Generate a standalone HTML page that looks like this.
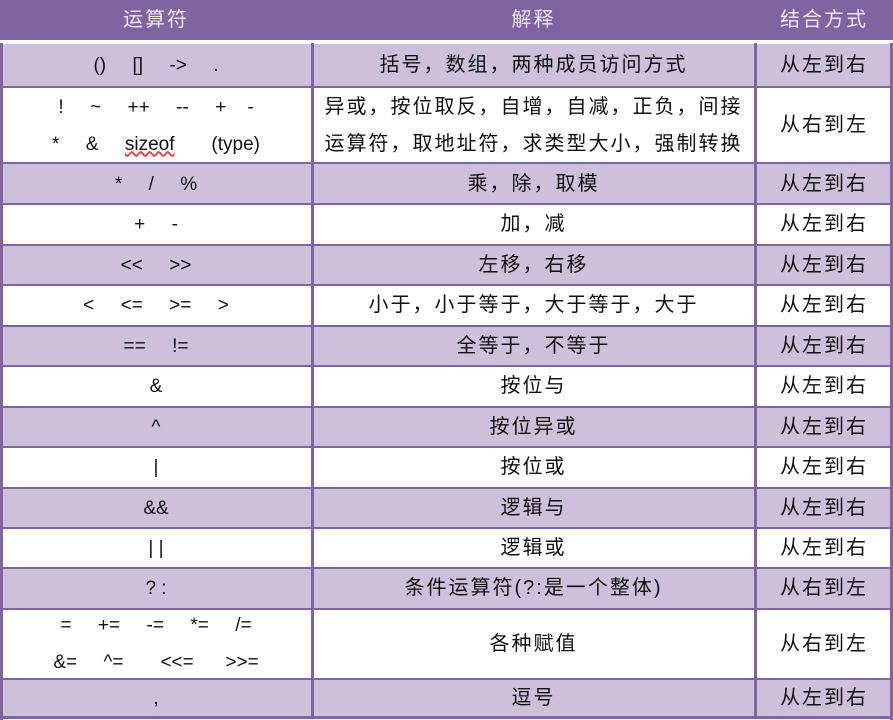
<!DOCTYPE html>
<html><head><meta charset="utf-8"><style>
body{margin:0;width:893px;height:720px;background:#fff;position:relative;overflow:hidden;font-family:"Liberation Sans","Noto Sans CJK SC",sans-serif;color:#111}
.hd{position:absolute;left:0;top:0;width:893px;height:40px;background:#8064a2}
.ht{position:absolute;top:0;height:40px;line-height:40px;text-align:center;color:#ece6f4;font-size:20px;letter-spacing:2px}
.r{position:absolute;left:0;width:893px;box-sizing:border-box}
.c{position:absolute;top:0;bottom:0;display:flex;align-items:center;justify-content:center;text-align:center;font-size:19px;line-height:37px}
.c>div{white-space:pre}
.z{font-size:20px;letter-spacing:2px;line-height:37px}
.l{position:absolute;background:#8064a2}
</style></head><body>
<div class="hd"></div>
<div class="ht" style="left:0;width:312px">运算符</div>
<div class="ht" style="left:312px;width:443px">解释</div>
<div class="ht" style="left:755px;width:138px">结合方式</div>

<div class="r" style="top:44px;height:43px;background:#ccc0da"><div class="c" style="left:0;width:312px"><div>()     []     ->     .</div></div><div class="c z" style="left:312px;width:443px"><div>括号，数组，两种成员访问方式</div></div><div class="c z" style="left:755px;width:138px"><div>从左到右</div></div></div>
<div class="r" style="top:87px;height:77px;background:#fff"><div class="c" style="left:0;width:312px"><div>!     ~     ++     --     +    -
*     &     <span style="text-decoration:underline wavy #e04040">sizeof</span>       (type)</div></div><div class="c z" style="left:312px;width:443px"><div>异或，按位取反，自增，自减，正负，间接
运算符，取地址符，求类型大小，强制转换</div></div><div class="c z" style="left:755px;width:138px"><div>从右到左</div></div></div>
<div class="r" style="top:164px;height:40px;background:#ccc0da"><div class="c" style="left:0;width:312px"><div>*     /     %</div></div><div class="c z" style="left:312px;width:443px"><div>乘，除，取模</div></div><div class="c z" style="left:755px;width:138px"><div>从左到右</div></div></div>
<div class="r" style="top:204px;height:41px;background:#fff"><div class="c" style="left:0;width:312px"><div>+     -</div></div><div class="c z" style="left:312px;width:443px"><div>加，减</div></div><div class="c z" style="left:755px;width:138px"><div>从左到右</div></div></div>
<div class="r" style="top:245px;height:40px;background:#ccc0da"><div class="c" style="left:0;width:312px"><div><<     >></div></div><div class="c z" style="left:312px;width:443px"><div>左移，右移</div></div><div class="c z" style="left:755px;width:138px"><div>从左到右</div></div></div>
<div class="r" style="top:285px;height:41px;background:#fff"><div class="c" style="left:0;width:312px"><div><     <=     >=     ></div></div><div class="c z" style="left:312px;width:443px"><div>小于，小于等于，大于等于，大于</div></div><div class="c z" style="left:755px;width:138px"><div>从左到右</div></div></div>
<div class="r" style="top:326px;height:40px;background:#ccc0da"><div class="c" style="left:0;width:312px"><div>==     !=</div></div><div class="c z" style="left:312px;width:443px"><div>全等于，不等于</div></div><div class="c z" style="left:755px;width:138px"><div>从左到右</div></div></div>
<div class="r" style="top:366px;height:41px;background:#fff"><div class="c" style="left:0;width:312px"><div>&</div></div><div class="c z" style="left:312px;width:443px"><div>按位与</div></div><div class="c z" style="left:755px;width:138px"><div>从左到右</div></div></div>
<div class="r" style="top:407px;height:40px;background:#ccc0da"><div class="c" style="left:0;width:312px"><div>^</div></div><div class="c z" style="left:312px;width:443px"><div>按位异或</div></div><div class="c z" style="left:755px;width:138px"><div>从左到右</div></div></div>
<div class="r" style="top:447px;height:41px;background:#fff"><div class="c" style="left:0;width:312px"><div>|</div></div><div class="c z" style="left:312px;width:443px"><div>按位或</div></div><div class="c z" style="left:755px;width:138px"><div>从左到右</div></div></div>
<div class="r" style="top:488px;height:40px;background:#ccc0da"><div class="c" style="left:0;width:312px"><div>&&</div></div><div class="c z" style="left:312px;width:443px"><div>逻辑与</div></div><div class="c z" style="left:755px;width:138px"><div>从左到右</div></div></div>
<div class="r" style="top:528px;height:40px;background:#fff"><div class="c" style="left:0;width:312px"><div>| |</div></div><div class="c z" style="left:312px;width:443px"><div>逻辑或</div></div><div class="c z" style="left:755px;width:138px"><div>从左到右</div></div></div>
<div class="r" style="top:568px;height:41px;background:#ccc0da"><div class="c" style="left:0;width:312px"><div>? :</div></div><div class="c z" style="left:312px;width:443px"><div>条件运算符(?:是一个整体)</div></div><div class="c z" style="left:755px;width:138px"><div>从右到左</div></div></div>
<div class="r" style="top:609px;height:70px;background:#fff"><div class="c" style="left:0;width:312px"><div>=     +=     -=     *=     /=
&=     ^=       <<=      >>=</div></div><div class="c z" style="left:312px;width:443px"><div>各种赋值</div></div><div class="c z" style="left:755px;width:138px"><div>从右到左</div></div></div>
<div class="r" style="top:679px;height:38px;background:#ccc0da"><div class="c" style="left:0;width:312px"><div>,</div></div><div class="c z" style="left:312px;width:443px"><div>逗号</div></div><div class="c z" style="left:755px;width:138px"><div>从左到右</div></div></div>

<div class="l" style="left:0;top:43px;width:3px;height:677px"></div>
<div class="l" style="left:890px;top:43px;width:3px;height:677px"></div>
<div class="l" style="left:311px;top:43px;width:3px;height:676px"></div>
<div class="l" style="left:754px;top:43px;width:3px;height:676px"></div>
<div class="l" style="left:0;top:716px;width:893px;height:3px"></div>
<div class="l" style="left:0;top:86px;width:893px;height:2px"></div>
<div class="l" style="left:0;top:162px;width:893px;height:2px"></div>
<div class="l" style="left:0;top:203px;width:893px;height:2px"></div>
<div class="l" style="left:0;top:244px;width:893px;height:2px"></div>
<div class="l" style="left:0;top:284px;width:893px;height:2px"></div>
<div class="l" style="left:0;top:325px;width:893px;height:2px"></div>
<div class="l" style="left:0;top:365px;width:893px;height:2px"></div>
<div class="l" style="left:0;top:406px;width:893px;height:2px"></div>
<div class="l" style="left:0;top:446px;width:893px;height:2px"></div>
<div class="l" style="left:0;top:487px;width:893px;height:2px"></div>
<div class="l" style="left:0;top:527px;width:893px;height:2px"></div>
<div class="l" style="left:0;top:567px;width:893px;height:2px"></div>
<div class="l" style="left:0;top:608px;width:893px;height:2px"></div>
<div class="l" style="left:0;top:678px;width:893px;height:2px"></div>
</body></html>
